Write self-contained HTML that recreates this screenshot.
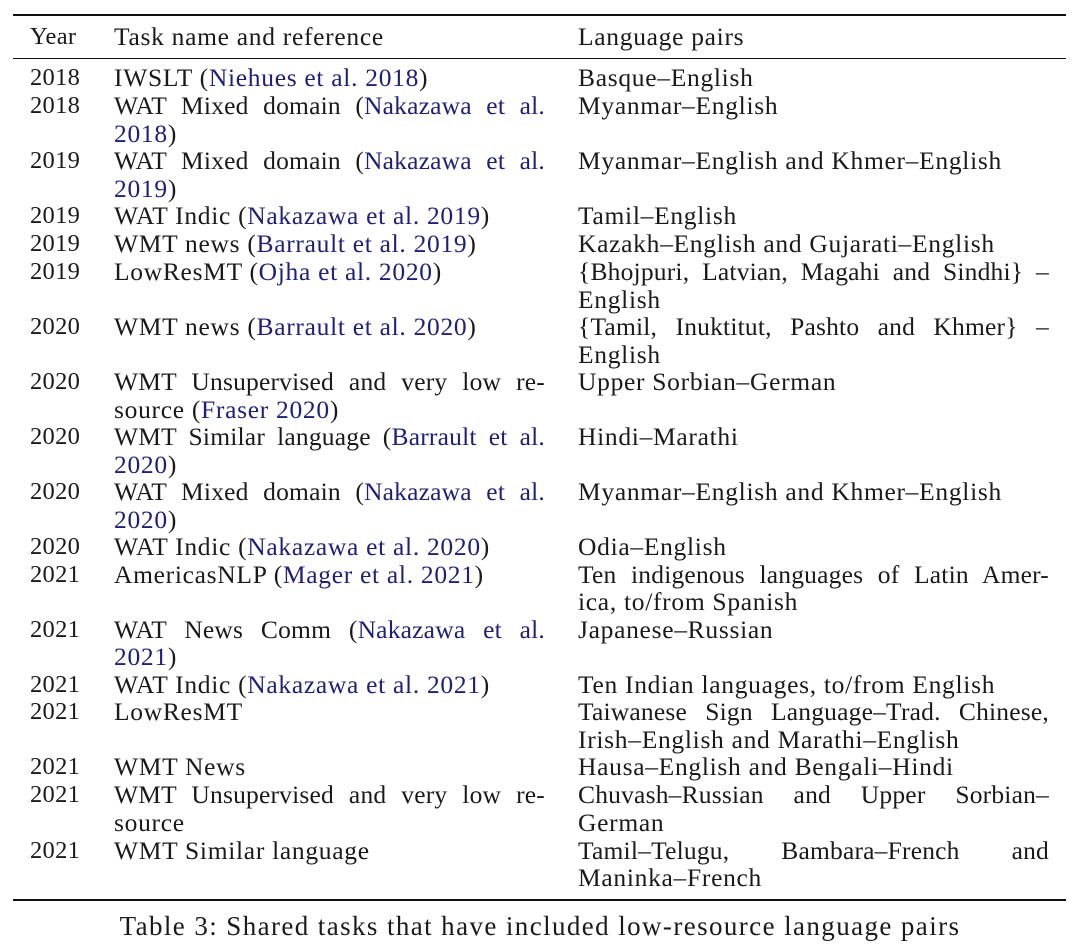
<!DOCTYPE html>
<html><head><meta charset="utf-8"><style>
html,body{margin:0;padding:0;background:#fff;}
body{width:1080px;height:952px;position:relative;overflow:hidden;font-family:"Liberation Serif","DejaVu Serif",serif;font-size:25.5px;letter-spacing:0.7px;color:#1a1a1a;}
.l{position:absolute;height:28px;line-height:28px;white-space:nowrap;}
.y{left:30px;letter-spacing:0.3px;font-size:24.5px;}
.t{left:114px;}
.p{left:578px;}
.j{white-space:normal;overflow:hidden;text-align:justify;text-align-last:justify;letter-spacing:0.2px;}
.t.j{width:431px;}
.p.j{width:471px;}
a{color:#1f1f7a;text-decoration:none;}
.rule{position:absolute;left:13px;width:1053px;background:#111;}
</style></head><body>
<div class="rule" style="top:14px;height:2px"></div>
<div class="rule" style="top:58px;height:1px"></div>
<div class="rule" style="top:899px;height:2px"></div>

<div class="l y" style="top:23px">Year</div><div class="l t" style="top:23px">Task name and reference</div><div class="l p" style="top:23px">Language pairs</div>

<div class="l y" style="top:64px">2018</div><div class="l t" style="top:64px">IWSLT (<a>Niehues et al. 2018</a>)</div><div class="l p" style="top:64px">Basque–English</div>

<div class="l y" style="top:92px">2018</div><div class="l t j" style="top:92px">WAT Mixed domain (<a>Nakazawa et al.</a></div><div class="l t" style="top:120px"><a>2018</a>)</div><div class="l p" style="top:92px">Myanmar–English</div>

<div class="l y" style="top:147px">2019</div><div class="l t j" style="top:147px">WAT Mixed domain (<a>Nakazawa et al.</a></div><div class="l t" style="top:175px"><a>2019</a>)</div><div class="l p" style="top:147px">Myanmar–English and Khmer–English</div>

<div class="l y" style="top:202px">2019</div><div class="l t" style="top:202px">WAT Indic (<a>Nakazawa et al. 2019</a>)</div><div class="l p" style="top:202px">Tamil–English</div>

<div class="l y" style="top:230px">2019</div><div class="l t" style="top:230px">WMT news (<a>Barrault et al. 2019</a>)</div><div class="l p" style="top:230px">Kazakh–English and Gujarati–English</div>

<div class="l y" style="top:258px">2019</div><div class="l t" style="top:258px">LowResMT (<a>Ojha et al. 2020</a>)</div><div class="l p j" style="top:258px">{Bhojpuri, Latvian, Magahi and Sindhi} –</div><div class="l p" style="top:286px">English</div>

<div class="l y" style="top:313px">2020</div><div class="l t" style="top:313px">WMT news (<a>Barrault et al. 2020</a>)</div><div class="l p j" style="top:313px">{Tamil, Inuktitut, Pashto and Khmer} –</div><div class="l p" style="top:341px">English</div>

<div class="l y" style="top:368px">2020</div><div class="l t j" style="top:368px">WMT Unsupervised and very low re-</div><div class="l t" style="top:396px">source (<a>Fraser 2020</a>)</div><div class="l p" style="top:368px">Upper Sorbian–German</div>

<div class="l y" style="top:423px">2020</div><div class="l t j" style="top:423px">WMT Similar language (<a>Barrault et al.</a></div><div class="l t" style="top:451px"><a>2020</a>)</div><div class="l p" style="top:423px">Hindi–Marathi</div>

<div class="l y" style="top:478px">2020</div><div class="l t j" style="top:478px">WAT Mixed domain (<a>Nakazawa et al.</a></div><div class="l t" style="top:506px"><a>2020</a>)</div><div class="l p" style="top:478px">Myanmar–English and Khmer–English</div>

<div class="l y" style="top:533px">2020</div><div class="l t" style="top:533px">WAT Indic (<a>Nakazawa et al. 2020</a>)</div><div class="l p" style="top:533px">Odia–English</div>

<div class="l y" style="top:561px">2021</div><div class="l t" style="top:561px">AmericasNLP (<a>Mager et al. 2021</a>)</div><div class="l p j" style="top:561px">Ten indigenous languages of Latin Amer-</div><div class="l p" style="top:588px">ica, to/from Spanish</div>

<div class="l y" style="top:616px">2021</div><div class="l t j" style="top:616px">WAT News Comm (<a>Nakazawa et al.</a></div><div class="l t" style="top:643px"><a>2021</a>)</div><div class="l p" style="top:616px">Japanese–Russian</div>

<div class="l y" style="top:671px">2021</div><div class="l t" style="top:671px">WAT Indic (<a>Nakazawa et al. 2021</a>)</div><div class="l p" style="top:671px">Ten Indian languages, to/from English</div>

<div class="l y" style="top:698px">2021</div><div class="l t" style="top:698px">LowResMT</div><div class="l p j" style="top:698px">Taiwanese Sign Language–Trad. Chinese,</div><div class="l p" style="top:726px">Irish–English and Marathi–English</div>

<div class="l y" style="top:753px">2021</div><div class="l t" style="top:753px">WMT News</div><div class="l p" style="top:753px">Hausa–English and Bengali–Hindi</div>

<div class="l y" style="top:781px">2021</div><div class="l t j" style="top:781px">WMT Unsupervised and very low re-</div><div class="l t" style="top:809px">source</div><div class="l p j" style="top:781px">Chuvash–Russian and Upper Sorbian–</div><div class="l p" style="top:809px">German</div>

<div class="l y" style="top:837px">2021</div><div class="l t" style="top:837px">WMT Similar language</div><div class="l p j" style="top:837px">Tamil–Telugu, Bambara–French and</div><div class="l p" style="top:864px">Maninka–French</div>

<div class="l" style="top:912px;left:0;width:1080px;text-align:center;font-size:27px;letter-spacing:1.4px;">Table 3: Shared tasks that have included low-resource language pairs</div>
</body></html>
